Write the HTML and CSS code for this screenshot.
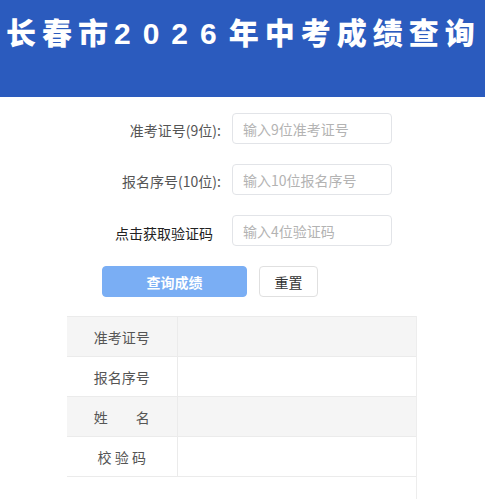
FILE: index.html
```html
<!DOCTYPE html>
<html lang="zh-CN">
<head>
<meta charset="utf-8">
<title>长春市2026年中考成绩查询</title>
<link rel="stylesheet" href="styles.css">
</head>
<body>
<header class="banner">
  <h1 class="title">长春市<span class="num">2026</span>年中考成绩查询</h1>
</header>
<main class="page">
  <form class="form">
    <label class="label" for="zkzh">准考证号(9位):</label>
    <input class="field" id="zkzh" type="text" placeholder="输入9位准考证号">
    <label class="label" for="bmxh">报名序号(10位):</label>
    <input class="field" id="bmxh" type="text" placeholder="输入10位报名序号">
    <span class="label label-dark">点击获取验证码</span>
    <input class="field" id="yzm" type="text" placeholder="输入4位验证码">
  </form>
  <div class="actions">
    <button class="btn btn-primary" type="button">查询成绩</button>
    <button class="btn btn-reset" type="button">重置</button>
  </div>
  <div class="result-wrap">
    <table class="result">
      <tr class="shade"><th>准考证号</th><td></td></tr>
      <tr><th>报名序号</th><td></td></tr>
      <tr class="shade"><th>姓　　名</th><td></td></tr>
      <tr><th>校 验 码</th><td></td></tr>
    </table>
  </div>
</main>
</body>
</html>
```
FILE: styles.css
```css
* { box-sizing: border-box; }
html, body { margin: 0; padding: 0; background: #fff; }
body {
  font-family: "Noto Sans CJK SC", "Liberation Sans", sans-serif;
  color: #555;
  font-size: 14px;
}
.banner {
  height: 97px;
  background: #2b5bbe;
  padding-top: 10px;
}
.title {
  margin: 0;
  padding-left: 6px;
  color: #fff;
  font-size: 30px;
  font-weight: 900;
  line-height: 42px;
  letter-spacing: 6px;
  white-space: nowrap;
}
.title .num {
  font-family: "Liberation Sans", sans-serif;
  font-weight: 700;
  letter-spacing: 12px;
  font-size: 30px;
}
.page { padding-top: 16px; }
.form {
  display: grid;
  grid-template-columns: 121px 160px;
  column-gap: 11px;
  row-gap: 20px;
  margin-left: 100px;
  align-items: center;
}
.label {
  text-align: right;
  color: #555;
  font-size: 14px;
  line-height: 20px;
  padding-top: 2px;
}
.label-dark {
  color: #222;
  padding-right: 8px;
  padding-top: 4px;
}
.field {
  height: 31px;
  width: 160px;
  border: 1px solid #e2e4e8;
  border-radius: 4px;
  padding: 0 10px;
  font-family: inherit;
  font-size: 14px;
  color: #333;
  outline: none;
}
.field::placeholder { color: #b3b3b3; }
.actions {
  display: flex;
  gap: 12px;
  margin: 20px 0 0 102px;
}
.btn {
  height: 31px;
  border-radius: 4px;
  font-family: inherit;
  font-size: 14px;
  cursor: pointer;
  padding: 0;
}
.btn-primary {
  width: 145px;
  background: #7aaef4;
  border: 1px solid #7aaef4;
  color: #fff;
  font-weight: 700;
}
.btn-reset {
  width: 59px;
  background: #fff;
  border: 1px solid #e0e0e0;
  color: #333;
}
.result-wrap {
  margin: 19px 0 0 67px;
  width: 350px;
  border-right: 1px solid #ededed;
  padding-bottom: 22px;
}
.result {
  width: 349px;
  border-collapse: collapse;
}
.result th, .result td {
  height: 40px;
  border-top: 1px solid #ebebeb;
  border-bottom: 1px solid #ebebeb;
  padding: 0;
}
.result th {
  width: 110px;
  font-weight: 400;
  color: #555;
  font-size: 14px;
  text-align: center;
  border-right: 1px solid #ebebeb;
}
.result .shade th, .result .shade td { background: #f5f5f5; }
```
